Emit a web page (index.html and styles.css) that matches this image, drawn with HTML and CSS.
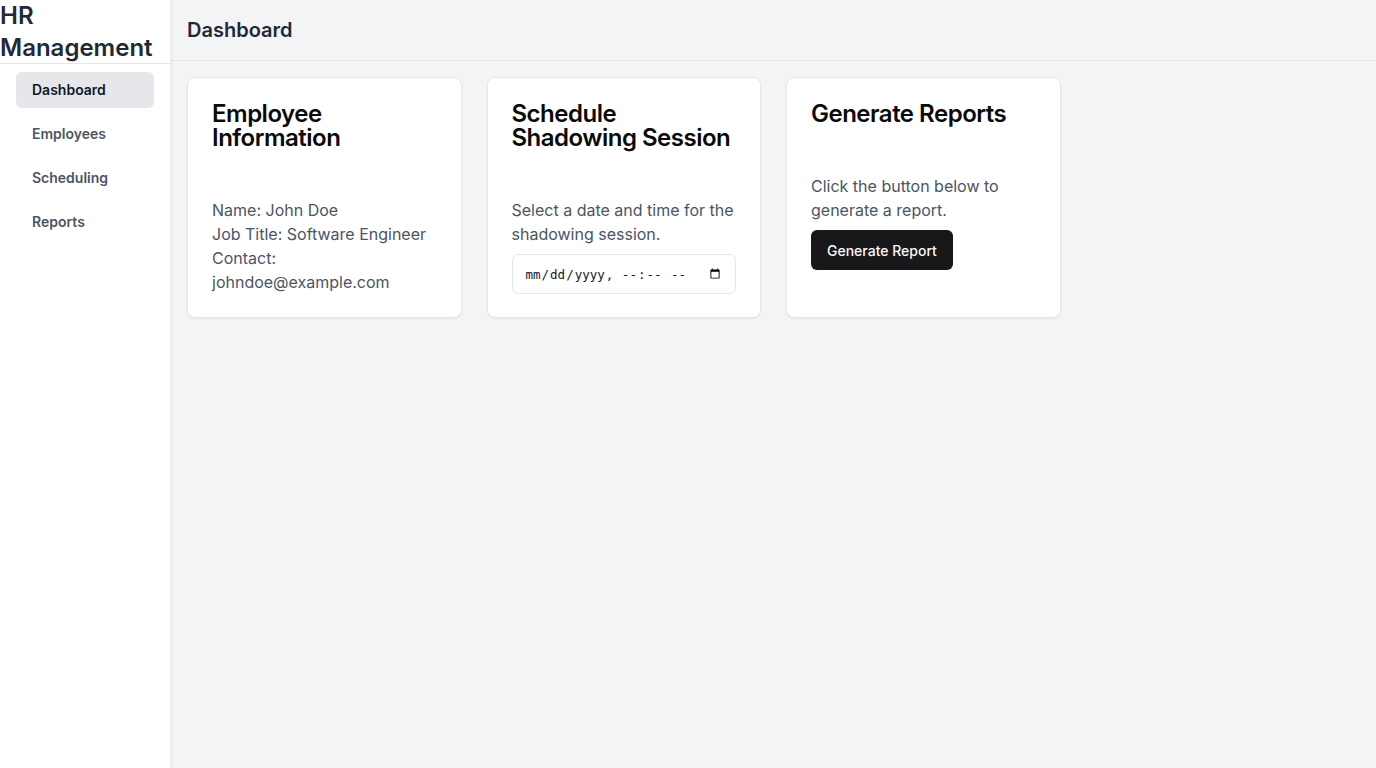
FILE: index.html
```html
<!DOCTYPE html>
<html lang="en">
<head>
<meta charset="utf-8">
<title>HR Management</title>
<link rel="stylesheet" href="styles.css">
</head>
<body>
<div class="app">
  <aside class="sidebar">
    <h1 class="brand">HR Management</h1>
    <nav class="nav">
      <a class="nav-item active" href="#">Dashboard</a>
      <a class="nav-item" href="#">Employees</a>
      <a class="nav-item" href="#">Scheduling</a>
      <a class="nav-item" href="#">Reports</a>
    </nav>
  </aside>
  <div class="main">
    <header class="topbar"><h2 class="page-title">Dashboard</h2></header>
    <section class="content">
      <div class="card">
        <h3 class="card-title">Employee Information</h3>
        <div class="card-body">
          <p>Name: John Doe</p>
          <p>Job Title: Software Engineer</p>
          <p>Contact: johndoe@example.com</p>
        </div>
      </div>
      <div class="card">
        <h3 class="card-title">Schedule Shadowing Session</h3>
        <div class="card-body">
          <p>Select a date and time for the shadowing session.</p>
          <input class="date-input" type="datetime-local">
        </div>
      </div>
      <div class="card">
        <h3 class="card-title">Generate Reports</h3>
        <div class="card-body">
          <p>Click the button below to generate a report.</p>
          <button class="btn">Generate Report</button>
        </div>
      </div>
    </section>
  </div>
</div>
</body>
</html>
```

FILE: styles.css
```css
* { box-sizing: border-box; }
html, body { margin: 0; padding: 0; height: 100%; }
body {
  font-family: Inter, "Noto Sans", "Liberation Sans", sans-serif;
  background: #f3f4f6;
  color: #111827;
}
.app { display: flex; min-height: 100vh; }
.sidebar {
  width: 171px;
  flex-shrink: 0;
  background: #ffffff;
  box-shadow: 1px 0 3px rgba(0,0,0,0.06);
  border-right: 1px solid #eceef1;
  z-index: 1;
}
.brand {
  margin: 0;
  font-size: 24px;
  line-height: 32px;
  font-weight: 600;
  color: #1f2937;
  padding: 0;
  border-bottom: 1px solid #e5e7eb;
  height: 64px;
}
.nav {
  display: flex;
  flex-direction: column;
  gap: 8px;
  padding: 8px 16px;
}
.nav-item {
  display: block;
  padding: 8px 16px;
  font-size: 14px;
  line-height: 20px;
  font-weight: 600;
  color: #4b5563;
  text-decoration: none;
  border-radius: 6px;
}
.nav-item.active { background: #e5e7eb; color: #111827; }
.main { flex: 1; min-width: 0; display: flex; flex-direction: column; }
.topbar {
  padding: 16px;
  height: 61px;
  border-bottom: 1px solid #e5e7eb;
}
.page-title {
  margin: 0;
  font-size: 20px;
  line-height: 28px;
  font-weight: 600;
  color: #1f2937;
}
.content {
  padding: 16px;
  display: grid;
  grid-template-columns: repeat(4, minmax(0, 1fr));
  gap: 25px;
  align-items: stretch;
}
.card {
  background: #ffffff;
  border: 1px solid #e5e7eb;
  border-radius: 8px;
  box-shadow: 0 1px 2px rgba(0,0,0,0.05);
  padding: 24px 24px 23px;
}
.card-title {
  margin: 0 0 48px;
  font-size: 24px;
  line-height: 24px;
  font-weight: 600;
  letter-spacing: -0.5px;
  color: #0a0a0a;
}
.card-body p {
  margin: 0;
  font-size: 16px;
  line-height: 24px;
  color: #4b5563;
}
.date-input {
  display: block;
  margin-top: 8px;
  width: 100%;
  height: 40px;
  padding: 8px 12px;
  border: 1px solid #e5e7eb;
  border-radius: 6px;
  background: #ffffff;
  font-family: "DejaVu Sans Mono", monospace;
  font-size: 12.5px;
  color: #111827;
}
.btn {
  display: block;
  margin-top: 8px;
  height: 40px;
  padding: 0 16px;
  background: #18181b;
  color: #fafafa;
  border: none;
  border-radius: 6px;
  font-family: Inter, "Noto Sans", sans-serif;
  font-size: 14px;
  font-weight: 500;
}
```
